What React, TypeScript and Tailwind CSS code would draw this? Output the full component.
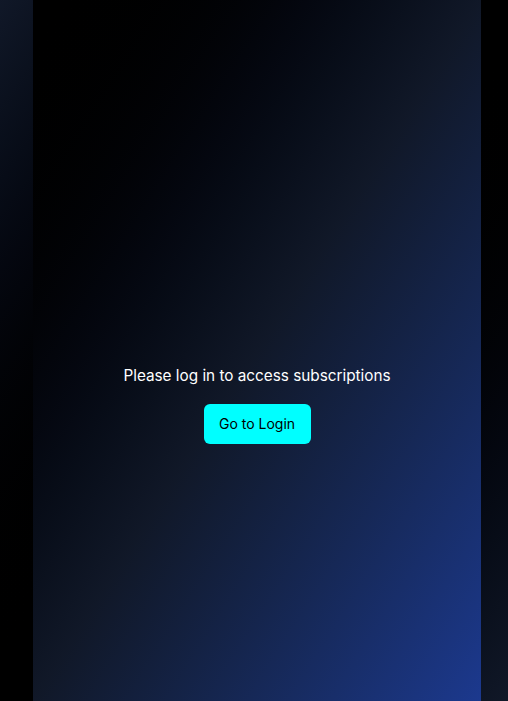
export default function App() {
  return (
    <div
      className="min-h-screen w-full bg-gradient-to-br from-gray-900 via-black to-gray-900 pl-[6px]"
      style={{ fontFamily: 'Inter, "Liberation Sans", sans-serif' }}
    >
      <div className="mx-auto flex h-screen max-w-md flex-col items-center justify-center bg-gradient-to-br from-black via-gray-900 to-blue-900 pt-[107px]">
        <p className="mb-4 text-[15.3px] leading-6 text-white">Please log in to access subscriptions</p>
        <button className="h-10 w-[107px] rounded-md bg-[#00ffff] text-sm leading-5 text-black">Go to Login</button>
      </div>
    </div>
  );
}
